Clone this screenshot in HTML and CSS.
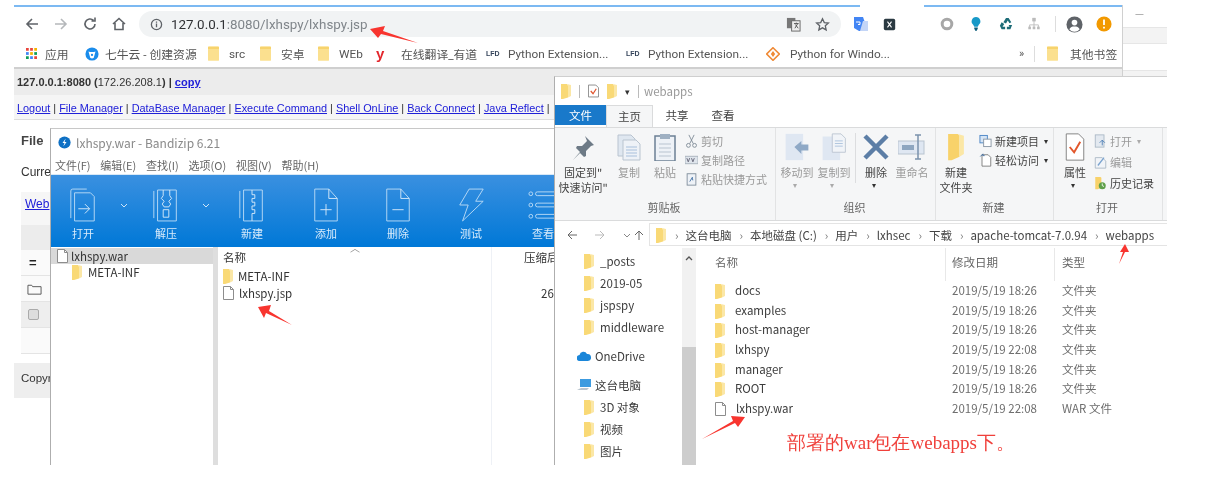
FILE: index.html
```html
<!DOCTYPE html>
<html lang="en">
<head>
    <meta charset="UTF-8">
    <meta name="viewport" content="width=device-width, initial-scale=1.0">
    <title>lxhspy deploy</title>
    <link rel="stylesheet" href="styles.css">
</head>
<body>
    <svg class="sprites" width="0" height="0">
        <symbol id="folder" viewBox="0 0 10 16"><path d="M0 1h6l1 1.500v12L2 16H0z" fill="#f9d976"/><path d="M6 1l4 1v11l-3 1.500V2.500z" fill="#fbe7a6"/></symbol>
        <symbol id="bm-folder" viewBox="0 0 12 16"><path d="M1 0h10a1 1 0 0 1 1 1v14a1 1 0 0 1-1 1H1a1 1 0 0 1-1-1V1a1 1 0 0 1 1-1z" fill="#fbe08f"/><path d="M0 3h12v-2H0z" fill="#f7d26b"/></symbol>
        <symbol id="file" viewBox="0 0 11 14"><path d="M.5.5h7l3 3v10H.5z" fill="#fff" stroke="#8d8d8d"/><path d="M7.500.5v3h3" fill="none" stroke="#8d8d8d"/></symbol>
    </svg>

    <div class="stage">
        <div class="behind-window">
            <div class="behind-min">—</div>
            <div class="behind-strip"></div>
            <div class="behind-gap"></div>
            <div class="behind-strip"></div>
        </div>

        <!-- browser -->
        <div class="browser">
            <div class="tab-line"><span class="tab-line-a"></span><span class="tab-line-gap"></span><span class="tab-line-b"></span></div>
            <div class="toolbar">
                <div class="nav-icons">
                    <svg class="nav-icon" viewBox="0 0 16 16"><path d="M14 8H3M8 3L3 8l5 5" fill="none" stroke="#5f6368" stroke-width="1.600"/></svg>
                    <svg class="nav-icon" viewBox="0 0 16 16"><path d="M2 8h11M8 3l5 5-5 5" fill="none" stroke="#b5b8bb" stroke-width="1.600"/></svg>
                    <svg class="nav-icon" viewBox="0 0 16 16"><path d="M13 8a5 5 0 1 1-1.500-3.600M13 1.500V5H9.500" fill="none" stroke="#5f6368" stroke-width="1.600"/></svg>
                    <svg class="nav-icon" viewBox="0 0 16 16"><path d="M2 8l6-5.500L14 8M4 7v6.500h8V7" fill="none" stroke="#5f6368" stroke-width="1.600"/></svg>
                </div>
                <div class="omnibox">
                    <svg class="info-icon" viewBox="0 0 14 14"><circle cx="7" cy="7" r="5.500" fill="none" stroke="#5f6368" stroke-width="1.400"/><path d="M7 6v4M7 3.800v1.200" stroke="#5f6368" stroke-width="1.400"/></svg>
                    <span class="url"><b>127.0.0.1</b>:8080/lxhspy/lxhspy.jsp</span>
                    <svg class="omni-icon" viewBox="0 0 16 16"><rect x="1" y="1" width="9" height="11" fill="#777"/><rect x="6" y="4" width="9" height="11" fill="#eee" stroke="#666"/><path d="M8.500 7h5M11 6v1M9.500 12l3-5M10 8l3 4" stroke="#555" fill="none"/></svg>
                    <svg class="omni-icon star-icon" viewBox="0 0 16 16"><path d="M8 1.800l1.900 4.100 4.400.5-3.300 3 .9 4.400L8 11.600l-3.900 2.200.9-4.400-3.300-3 4.400-.5z" fill="none" stroke="#5f6368" stroke-width="1.400"/></svg>
                </div>
                <div class="ext-icons">
                    <svg class="ext ext-gt" viewBox="0 0 16 16"><path d="M1 1h9l5 14H6L1 12z" fill="#4285f4"/><path d="M10 5h5v10H7z" fill="#c3d5f7"/><path d="M3 6h4v2.500H5" fill="none" stroke="#fff"/></svg>
                    <svg class="ext ext-x" viewBox="0 0 16 16"><rect x="1" y="1" width="14" height="14" rx="2" fill="#2b3a42"/><path d="M5.500 4.500l5 7M10.500 4.500l-5 7" stroke="#fff" stroke-width="1.300"/></svg>
                    <svg class="ext ext-ring" viewBox="0 0 16 16"><circle cx="8" cy="8" r="5.500" fill="none" stroke="#a7a7a7" stroke-width="3.400"/></svg>
                    <svg class="ext ext-bulb" viewBox="0 0 16 16"><path d="M8 0a5 5 0 0 1 3 9l-1 2H6L5 9a5 5 0 0 1 3-9z" fill="#1799c8"/><path d="M6 12h4v1.500L8.500 16h-1L6 13.500z" fill="#0f5f7c"/></svg>
                    <svg class="ext ext-recycle" viewBox="0 0 16 16"><path d="M8 1L5 6l3 1.500L10 4l2 3 2-1-3-5zM1 10l2-4 3 2-2 3h3v3H3zM15 9l-2 5H9v-3h3l-1-2z" fill="#1c6b77"/></svg>
                    <svg class="ext ext-tree" viewBox="0 0 16 16"><path d="M8 1v5M3 13V9h10v4M8 6v7" fill="none" stroke="#bbb"/><rect x="6" y="1" width="4" height="4" fill="#bbb"/><rect x="1.500" y="11" width="3" height="3" fill="#bbb"/><rect x="6.500" y="11" width="3" height="3" fill="#bbb"/><rect x="11.500" y="11" width="3" height="3" fill="#bbb"/></svg>
                    <span class="ext-sep"></span>
                    <svg class="ext ext-user" viewBox="0 0 18 18"><circle cx="9" cy="9" r="8.500" fill="#5f6368"/><circle cx="9" cy="7" r="3" fill="#fff"/><path d="M3.500 14c1-2.500 3-3 5.500-3s4.500.5 5.500 3a7 7 0 0 1-11 0z" fill="#fff"/></svg>
                    <svg class="ext ext-alert" viewBox="0 0 18 18"><circle cx="9" cy="9" r="8.500" fill="#f29900"/><path d="M9 4v6M9 12v2" stroke="#fff" stroke-width="2"/></svg>
                </div>
            </div>
            <div class="bookmarks">
                <span class="bm bm-apps">
                    <svg class="apps-grid" viewBox="0 0 12 12"><g fill="#e8453c"><rect width="3" height="3"/><rect x="4.500" width="3" height="3"/></g><rect x="9" width="3" height="3" fill="#f4b400"/><rect y="4.500" width="3" height="3" fill="#4285f4"/><rect x="4.500" y="4.500" width="3" height="3" fill="#f4b400"/><rect x="9" y="4.500" width="3" height="3" fill="#0f9d58"/><rect y="9" width="3" height="3" fill="#0f9d58"/><rect x="4.500" y="9" width="3" height="3" fill="#4285f4"/><rect x="9" y="9" width="3" height="3" fill="#e8453c"/></svg>
                    应用
                </span>
                <span class="bm bm-qiniu">
                    <svg class="bm-icon" viewBox="0 0 16 16"><circle cx="8" cy="8" r="7.500" fill="#1a8ceb"/><path d="M4 5c2 1 6 1 8 0l-1.500 5.500a2.500 2.500 0 0 1-5 0z" fill="#fff"/><circle cx="8" cy="9" r="1.300" fill="#1a8ceb"/></svg>
                    七牛云 - 创建资源
                </span>
                <span class="bm bm-src"><svg class="bm-folder"><use href="#bm-folder"/></svg>src</span>
                <span class="bm bm-az"><svg class="bm-folder"><use href="#bm-folder"/></svg>安卓</span>
                <span class="bm bm-web"><svg class="bm-folder"><use href="#bm-folder"/></svg>WEb</span>
                <span class="bm bm-yd"><span class="youdao">y</span>在线翻译_有道</span>
                <span class="bm bm-lfd"><span class="lfd">LFD</span>Python Extension...</span>
                <span class="bm bm-lfd2"><span class="lfd">LFD</span>Python Extension...</span>
                <span class="bm bm-py">
                    <svg class="bm-icon" viewBox="0 0 16 16"><path d="M8 .8L15.200 8 8 15.200.8 8z" fill="none" stroke="#ef8a36" stroke-width="1.800"/><path d="M8 4.500l2.500 3.500L8 11.500 5.500 8z" fill="#ef8a36"/></svg>
                    Python for Windo...
                </span>
                <span class="bm bm-more">»</span>
                <span class="bm-sep"></span>
                <span class="bm bm-other"><svg class="bm-folder"><use href="#bm-folder"/></svg>其他书签</span>
            </div>
            <div class="info-bar"><b>127.0.0.1:8080 (</b>172.26.208.1<b>) | <a href="#">copy</a></b></div>
            <div class="page-nav">
                <a href="#">Logout</a> | <a href="#">File Manager</a> | <a href="#">DataBase Manager</a> | <a href="#">Execute Command</a> | <a href="#">Shell OnLine</a> | <a href="#">Back Connect</a> | <a href="#">Java Reflect</a> |
            </div>
            <div class="page-body">
                <h2 class="page-title">File</h2>
                <p class="page-current">Curre</p>
                <div class="web-row"><a href="#">Web</a></div>
                <div class="table-head"></div>
                <div class="table-row row-eq"><b>=</b></div>
                <div class="table-row row-folder">
                    <svg class="row-folder-icon" viewBox="0 0 16 12"><path d="M1 11.500V2h4l1 1.500h9v8z" fill="none" stroke="#555"/></svg>
                </div>
                <div class="table-row row-check"><span class="fake-check"></span></div>
                <div class="table-row"></div>
            </div>
            <div class="page-foot">Copyr</div>
        </div>

        <!-- bandizip -->
        <div class="bandizip">
            <div class="bz-title">
                <svg class="bz-logo" viewBox="0 0 16 16"><circle cx="8" cy="8" r="7.500" fill="#0e70c4"/><path d="M9.500 3L5.500 8.500H8L6.500 13l4-5.500H8z" fill="#fff"/></svg>
                lxhspy.war - Bandizip 6.21
            </div>
            <div class="bz-menu"><span>文件(F)</span><span>编辑(E)</span><span>查找(I)</span><span>选项(O)</span><span>视图(V)</span><span>帮助(H)</span></div>
            <div class="bz-tools">
                <div class="bz-tool tool-open">
                    <svg class="bz-icon" viewBox="0 0 32 36"><path d="M3 32V3a2 2 0 0 1 2-2h15M7 35V5h17l4 4v26z" fill="none" stroke="#b9daf5"/><path d="M11 22h12M18 17l5 5-5 5" fill="none" stroke="#d6eafa"/></svg>
                    打开
                </div>
                <svg class="bz-chevron chev-open" viewBox="0 0 8 5"><path d="M1 1l3 3 3-3" fill="none" stroke="#cfe5f8"/></svg>
                <div class="bz-tool tool-extract">
                    <svg class="bz-icon" viewBox="0 0 32 36"><path d="M3 32V3M7 35V2h20v33z" fill="none" stroke="#b9daf5"/><path d="M13 2v6l-2 3 3 3-2 3 2 3h5l2-3-2-3 3-3-2-3V2M13 23h6v8h-6z" fill="none" stroke="#d6eafa"/></svg>
                    解压
                </div>
                <svg class="bz-chevron chev-extract" viewBox="0 0 8 5"><path d="M1 1l3 3 3-3" fill="none" stroke="#cfe5f8"/></svg>
                <div class="bz-tool tool-new">
                    <svg class="bz-icon" viewBox="0 0 32 36"><path d="M3 32V3M7 35V2h20v33z" fill="none" stroke="#b9daf5"/><path d="M16 2v5h3v4h-3v4h3v4h-3v4h3v4h-3v8" fill="none" stroke="#d6eafa"/></svg>
                    新建
                </div>
                <div class="bz-tool tool-add">
                    <svg class="bz-icon" viewBox="0 0 32 36"><path d="M4 35V1h15l9 10v24z" fill="none" stroke="#b9daf5"/><path d="M19 1v10h9M16 17v12M10 23h12" fill="none" stroke="#d6eafa"/></svg>
                    添加
                </div>
                <div class="bz-tool tool-del">
                    <svg class="bz-icon" viewBox="0 0 32 36"><path d="M4 35V1h15l9 10v24z" fill="none" stroke="#b9daf5"/><path d="M19 1v10h9M10 23h12" fill="none" stroke="#d6eafa"/></svg>
                    删除
                </div>
                <div class="bz-tool tool-test">
                    <svg class="bz-icon" viewBox="0 0 32 36"><path d="M14 1h15l-8 13h8L7 35l6-17H4z" fill="none" stroke="#b9daf5"/></svg>
                    测试
                </div>
                <div class="bz-tool tool-view">
                    <svg class="bz-icon" viewBox="0 0 32 36"><g fill="none" stroke="#b9daf5"><circle cx="3" cy="6" r="2"/><circle cx="3" cy="18" r="2"/><circle cx="3" cy="30" r="2"/><rect x="8" y="4" width="24" height="4" rx="2"/><rect x="8" y="16" width="24" height="4" rx="2"/><rect x="8" y="28" width="24" height="4" rx="2"/></g></svg>
                    查看
                </div>
            </div>
            <div class="bz-main">
                <div class="bz-tree">
                    <div class="bz-tree-row selected"><svg class="file-ico"><use href="#file"/></svg>lxhspy.war</div>
                    <div class="bz-tree-row indent"><svg class="folder-ico"><use href="#folder"/></svg>META-INF</div>
                </div>
                <div class="bz-list">
                    <div class="bz-head"><span class="bz-col-name">名称</span><span class="bz-sort">︿</span><span class="bz-col-size">压缩后</span></div>
                    <div class="bz-row"><span class="bz-col-name"><svg class="folder-ico"><use href="#folder"/></svg>META-INF</span></div>
                    <div class="bz-row"><span class="bz-col-name"><svg class="file-ico"><use href="#file"/></svg>lxhspy.jsp</span><span class="bz-col-size">26</span></div>
                </div>
            </div>
        </div>

        <!-- explorer -->
        <div class="explorer">
            <div class="ex-title">
                <svg class="folder-ico"><use href="#folder"/></svg>
                <span class="ex-bar"></span>
                <svg class="ex-qa" viewBox="0 0 12 14"><path d="M.5.5h8l3 3v10H.5z" fill="#fff" stroke="#888"/><path d="M3 7l2.500 3L9 4.500" fill="none" stroke="#e0532d" stroke-width="1.300"/></svg>
                <svg class="folder-ico"><use href="#folder"/></svg>
                <span class="ex-caret">▾</span>
                <span class="ex-bar"></span>
                <span class="ex-name">webapps</span>
            </div>
            <div class="ex-tabs">
                <span class="ex-tab tab-file">文件</span>
                <span class="ex-tab tab-home">主页</span>
                <span class="ex-tab">共享</span>
                <span class="ex-tab">查看</span>
            </div>
            <div class="ribbon">
                <div class="rb-group group-clip">
                    <div class="rb-body">
                        <div class="rb-big big-pin">
                            <svg class="rb-icon" viewBox="0 0 28 28"><path d="M16 3l9 9-3 1-5 5 0 5-2 1-4-4-7 7 7-8-4-4 1-2h5l5-5z" fill="#6d7a86"/></svg>
                            <span>固定到"<br>快速访问"</span>
                        </div>
                        <div class="rb-big big-dim big-copy">
                            <svg class="rb-icon" viewBox="0 0 28 28"><path d="M3 2h13l4 4v17H3z" fill="#dfe7f0" stroke="#b9c4d0"/><path d="M8 7h13l4 4v16H8z" fill="#eef2f7" stroke="#b9c4d0"/><path d="M11 14h11M11 17h11M11 20h11M11 23h11" stroke="#a8c0dc"/></svg>
                            <span>复制</span>
                        </div>
                        <div class="rb-big big-dim big-paste">
                            <svg class="rb-icon" viewBox="0 0 28 28"><rect x="4" y="3" width="20" height="25" fill="#eef2f7" stroke="#6c8095" stroke-width="1.500"/><rect x="9" y="1" width="10" height="5" fill="#9fb0c2"/><path d="M8 11h12M8 15h12M8 19h12M8 23h12" stroke="#b9c4d0"/></svg>
                            <span>粘贴</span>
                        </div>
                        <div class="rb-small-col col-clip">
                            <div class="rb-small"><svg class="rb-mini" viewBox="0 0 14 16"><path d="M4 1l5 10M10 1L5 11" stroke="#7b8894" fill="none"/><circle cx="3.500" cy="13" r="2.200" fill="none" stroke="#7b8894"/><circle cx="10.500" cy="13" r="2.200" fill="none" stroke="#7b8894"/></svg>剪切</div>
                            <div class="rb-small"><svg class="rb-mini" viewBox="0 0 14 14"><rect y="3" width="14" height="8" fill="#dfe5ec" stroke="#a9b3bd"/><path d="M2 5l1.500 4L5 5M7 5l1.500 4L10 5" fill="none" stroke="#667"/></svg>复制路径</div>
                            <div class="rb-small"><svg class="rb-mini" viewBox="0 0 14 16"><rect x="2" y="2" width="10" height="13" fill="#eef2f7" stroke="#7d8b99"/><path d="M5 11l3-5v3h1" fill="none" stroke="#3f6ea3"/></svg>粘贴快捷方式</div>
                        </div>
                    </div>
                    <div class="rb-label">剪贴板</div>
                </div>
                <div class="rb-group group-org">
                    <div class="rb-body">
                        <div class="rb-big big-dim big-move">
                            <svg class="rb-icon" viewBox="0 0 28 32"><rect x="1" y="1" width="20" height="30" fill="#dfe7f2"/><path d="M11 16l8-7v4h8v7h-8v4z" fill="#8fa9c6"/></svg>
                            <span>移动到<i class="rb-down">▾</i></span>
                        </div>
                        <div class="rb-big big-dim big-copyto">
                            <svg class="rb-icon" viewBox="0 0 28 32"><rect x="1" y="4" width="20" height="27" fill="#dfe7f2"/><path d="M12 1h10l5 5v16H12z" fill="#f1f4f8" stroke="#b9c4d0"/><path d="M15 9h9M15 12h9M15 15h9" stroke="#a8c0dc"/></svg>
                            <span>复制到<i class="rb-down">▾</i></span>
                        </div>
                        <span class="rb-divider"></span>
                        <div class="rb-big big-del">
                            <svg class="rb-icon" viewBox="0 0 28 28"><path d="M3 3l22 22M25 3L3 25" stroke="#5c7ea6" stroke-width="4.500"/></svg>
                            <span>删除<i class="rb-down dark">▾</i></span>
                        </div>
                        <div class="rb-big big-dim big-rename">
                            <svg class="rb-icon" viewBox="0 0 28 28"><rect x="0" y="8" width="26" height="13" fill="#dfe7f2" stroke="#b9c4d0"/><rect x="4" y="12" width="12" height="5" fill="#8ea6c0"/><path d="M20 2v24M17 2h6M17 26h6" stroke="#7b93ad" stroke-width="1.500"/></svg>
                            <span>重命名</span>
                        </div>
                    </div>
                    <div class="rb-label">组织</div>
                </div>
                <div class="rb-group group-new">
                    <div class="rb-body">
                        <div class="rb-big big-folder">
                            <svg class="rb-icon" viewBox="0 0 20 32"><path d="M1 1h11l2 2v24l-9 4H1z" fill="#f8d26a"/><path d="M12 1l7 2v21l-5 3V3z" fill="#fbe7a6"/></svg>
                            <span>新建<br>文件夹</span>
                        </div>
                        <div class="rb-small-col col-new">
                            <div class="rb-small"><svg class="rb-mini" viewBox="0 0 14 14"><rect x="1" y="1" width="8" height="8" fill="#d6e5f5" stroke="#4c86c6"/><rect x="5" y="5" width="8" height="8" fill="#fff" stroke="#8a97a5"/></svg>新建项目<i class="rb-side">▾</i></div>
                            <div class="rb-small"><svg class="rb-mini" viewBox="0 0 14 16"><path d="M3 2h7l3 3v10H3z" fill="#fff" stroke="#777"/><path d="M1 4l3-3v2h2" fill="none" stroke="#3f6ea3"/></svg>轻松访问<i class="rb-side">▾</i></div>
                        </div>
                    </div>
                    <div class="rb-label">新建</div>
                </div>
                <div class="rb-group group-open">
                    <div class="rb-body">
                        <div class="rb-big big-props">
                            <svg class="rb-icon" viewBox="0 0 22 32"><path d="M1 1h14l6 6v24H1z" fill="#fff" stroke="#777"/><path d="M5 16l5 6 7-12" fill="none" stroke="#e2572b" stroke-width="2.200"/></svg>
                            <span>属性<i class="rb-down dark">▾</i></span>
                        </div>
                        <div class="rb-small-col col-open">
                            <div class="rb-small rb-muted"><svg class="rb-mini" viewBox="0 0 14 16"><rect x="1" y="1" width="10" height="14" fill="#e3e9f0" stroke="#a9b7c5"/><path d="M9 13V7M6 10l3-3 3 3" stroke="#4a7db5" fill="none"/></svg>打开 <i class="rb-side light">▾</i></div>
                            <div class="rb-small rb-muted"><svg class="rb-mini" viewBox="0 0 14 16"><path d="M1 3h8l4 4v8H1z" fill="#f1f4f8" stroke="#a9b7c5"/><path d="M4 12l7-9" stroke="#7aa3cf" stroke-width="1.500"/></svg>编辑</div>
                            <div class="rb-small"><svg class="rb-mini" viewBox="0 0 14 16"><path d="M1 1h6l1 1v11l-4 2H1z" fill="#f8d26a"/><circle cx="9" cy="11" r="4" fill="#5fa04a"/><path d="M9 8.500V11l2 1" stroke="#fff" fill="none"/></svg>历史记录</div>
                        </div>
                    </div>
                    <div class="rb-label">打开</div>
                </div>
            </div>
            <div class="ex-address">
                <svg class="ex-nav" viewBox="0 0 12 12"><path d="M11 6H2M6 2L2 6l4 4" fill="none" stroke="#666"/></svg>
                <svg class="ex-nav ex-nav-off" viewBox="0 0 12 12"><path d="M1 6h9M6 2l4 4-4 4" fill="none" stroke="#bbb"/></svg>
                <svg class="ex-nav ex-nav-drop" viewBox="0 0 12 12"><path d="M3 5l3 3 3-3" fill="none" stroke="#888"/></svg>
                <svg class="ex-nav" viewBox="0 0 12 12"><path d="M6 11V2M2 6l4-4 4 4" fill="none" stroke="#666"/></svg>
                <div class="crumbs">
                    <svg class="folder-ico"><use href="#folder"/></svg>
                    <i class="crumb-sep">›</i><span>这台电脑</span>
                    <i class="crumb-sep">›</i><span>本地磁盘 (C:)</span>
                    <i class="crumb-sep">›</i><span>用户</span>
                    <i class="crumb-sep">›</i><span>lxhsec</span>
                    <i class="crumb-sep">›</i><span>下载</span>
                    <i class="crumb-sep">›</i><span>apache-tomcat-7.0.94</span>
                    <i class="crumb-sep">›</i><span>webapps</span>
                </div>
            </div>
            <div class="ex-main">
                <div class="ex-tree">
                    <div class="ex-tree-row sub"><svg class="folder-ico"><use href="#folder"/></svg>_posts</div>
                    <div class="ex-tree-row sub"><svg class="folder-ico"><use href="#folder"/></svg>2019-05</div>
                    <div class="ex-tree-row sub"><svg class="folder-ico"><use href="#folder"/></svg>jspspy</div>
                    <div class="ex-tree-row sub"><svg class="folder-ico"><use href="#folder"/></svg>middleware</div>
                    <div class="ex-tree-row top gap">
                        <svg class="tree-icon" viewBox="0 0 14 10"><path d="M3 10a3 3 0 0 1-.5-6A4 4 0 0 1 10 3a3.500 3.500 0 0 1 1 7z" fill="#1a86d9"/></svg>
                        OneDrive
                    </div>
                    <div class="ex-tree-row top gap">
                        <svg class="tree-icon" viewBox="0 0 14 12"><rect x="3" y="0" width="11" height="8" fill="#3c9be0"/><path d="M0 11l4-2h8l-2 2z" fill="#b9c4cd"/></svg>
                        这台电脑
                    </div>
                    <div class="ex-tree-row sub"><svg class="folder-ico"><use href="#folder"/></svg>3D 对象</div>
                    <div class="ex-tree-row sub"><svg class="folder-ico"><use href="#folder"/></svg>视频</div>
                    <div class="ex-tree-row sub"><svg class="folder-ico"><use href="#folder"/></svg>图片</div>
                </div>
                <div class="ex-scroll">
                    <svg class="scroll-up" viewBox="0 0 8 5"><path d="M1 4l3-3 3 3" fill="none" stroke="#555" stroke-width="1.300"/></svg>
                    <div class="scroll-thumb"></div>
                </div>
                <div class="ex-list">
                    <div class="ex-head">
                        <span class="head-name">名称</span>
                        <span class="head-date">修改日期</span>
                        <span class="head-type">类型</span>
                    </div>
                    <div class="ex-row"><span class="cell-name"><svg class="folder-ico"><use href="#folder"/></svg>docs</span><span>2019/5/19 18:26</span><span>文件夹</span></div>
                    <div class="ex-row"><span class="cell-name"><svg class="folder-ico"><use href="#folder"/></svg>examples</span><span>2019/5/19 18:26</span><span>文件夹</span></div>
                    <div class="ex-row"><span class="cell-name"><svg class="folder-ico"><use href="#folder"/></svg>host-manager</span><span>2019/5/19 18:26</span><span>文件夹</span></div>
                    <div class="ex-row"><span class="cell-name"><svg class="folder-ico"><use href="#folder"/></svg>lxhspy</span><span>2019/5/19 22:08</span><span>文件夹</span></div>
                    <div class="ex-row"><span class="cell-name"><svg class="folder-ico"><use href="#folder"/></svg>manager</span><span>2019/5/19 18:26</span><span>文件夹</span></div>
                    <div class="ex-row"><span class="cell-name"><svg class="folder-ico"><use href="#folder"/></svg>ROOT</span><span>2019/5/19 18:26</span><span>文件夹</span></div>
                    <div class="ex-row"><span class="cell-name"><svg class="file-ico"><use href="#file"/></svg>lxhspy.war</span><span>2019/5/19 22:08</span><span>WAR 文件</span></div>
                    <p class="ex-note">部署的war包在webapps下。</p>
                </div>
            </div>
        </div>

        <!-- red arrows drawn over the screenshots -->
        <svg class="arrows" viewBox="0 0 1215 491">
            <g fill="#f8352f">
                <polygon points="370,29 385,26 383,31 418,43 381,34 378,38"/>
                <polygon points="258,307 271,305 269,311 292,325 266,313 264,318"/>
                <polygon points="745,417 731,416 733,421 702,439 735,423 738,427"/>
                <polygon points="1125,244 1120,252 1123,252 1119,264 1125,252 1129,252"/>
            </g>
        </svg>
    </div>
</body>
</html>
```

FILE: styles.css
```css
:root {
    --ui-font: "Noto Sans CJK SC", "Noto Sans", sans-serif;
    --page-font: "Liberation Sans", Arial, sans-serif;
    --text-dim: #9a9a9a;
    --text-mid: #6d6d6d;
    --text-dark: #3c3c3c;
}

* {
    box-sizing: border-box;
}

html, body {
    margin: 0;
    height: 100%;
    overflow: hidden;
    background: #fff;
}

.sprites {
    position: absolute;
}

.stage {
    position: relative;
    width: 1215px;
    height: 491px;
    overflow: hidden;
    font-family: var(--ui-font);
    filter: blur(0.35px);
}

svg {
    display: block;
    flex: none;
}

.folder-ico {
    width: 10px;
    height: 16px;
}

.file-ico {
    width: 11px;
    height: 14px;
}

/* window behind the browser */
.behind-window {
    position: absolute;
    left: 1123px;
    top: 5px;
    width: 44px;
    height: 72px;
}

.behind-min {
    height: 22px;
    padding: 0 0 0 12px;
    font-size: 10px;
    line-height: 16px;
    color: #888;
}

.behind-strip {
    height: 17px;
    background: #f3f3f3;
    border-top: 1px solid #e6e6e6;
    border-bottom: 1px solid #e6e6e6;
}

.behind-gap {
    height: 26px;
}

/* browser window */
.browser {
    position: absolute;
    left: 14px;
    top: 5px;
    width: 1109px;
    height: 400px;
    background: #fff;
    border-right: 1px solid #d0d0d0;
}

.tab-line {
    display: flex;
    height: 2px;
}

.tab-line-a {
    width: 846px;
    background: #7cb9f2;
}

.tab-line-gap {
    width: 64px;
}

.tab-line-b {
    flex: 1;
    background: #7cb9f2;
}

.toolbar {
    display: flex;
    align-items: center;
    height: 31px;
    padding-top: 3px;
}

.nav-icons {
    display: flex;
    gap: 13px;
    padding-left: 10px;
    width: 125px;
}

.nav-icon {
    width: 16px;
    height: 16px;
}

.omnibox {
    display: flex;
    align-items: center;
    width: 702px;
    height: 26px;
    border-radius: 13px;
    background: #f1f3f4;
    padding-left: 11px;
}

.info-icon {
    width: 13px;
    height: 13px;
    margin-right: 8px;
}

.url {
    flex: 1;
    font-family: Roboto, sans-serif;
    font-size: 13.400px;
    color: #80868b;
}

.url b {
    font-weight: 400;
    color: #303134;
}

.omni-icon {
    width: 15px;
    height: 15px;
    margin-right: 14px;
}

.star-icon {
    margin-right: 11px;
}

.ext-icons {
    display: flex;
    align-items: center;
    padding-left: 12px;
}

.ext {
    width: 14px;
    height: 14px;
}

.ext-gt { width: 16px; height: 16px; margin-right: 14px; }
.ext-x { width: 13px; height: 13px; margin-right: 44px; }
.ext-ring { margin-right: 15px; }
.ext-bulb { margin-right: 16px; }
.ext-recycle { margin-right: 14px; }
.ext-tree { margin-right: 14px; }
.ext-user { width: 17px; height: 17px; margin-right: 13px; }
.ext-alert { width: 16px; height: 16px; }

.ext-sep {
    width: 1px;
    height: 16px;
    background: #ddd;
    margin-right: 10px;
}

.bookmarks {
    display: flex;
    align-items: center;
    height: 31px;
    padding-top: 2px;
    font-family: Roboto, "Noto Sans CJK SC", sans-serif;
    font-size: 11.800px;
    color: #555;
    border-bottom: 2px solid #cfcfcf;
    white-space: nowrap;
}

.bm {
    display: flex;
    align-items: center;
    gap: 6px;
}

.bm-apps { width: 59px; margin-left: 12px; }
.bm-qiniu { width: 123px; }
.bm-src { width: 52px; }
.bm-az { width: 58px; }
.bm-web { width: 57px; }
.bm-yd { width: 111px; }
.bm-lfd { width: 140px; }
.bm-lfd2 { width: 140px; }
.bm-py { width: 253px; gap: 10px; }
.bm-more { width: 15px; font-size: 11px; }
.bm-other .bm-folder { margin-right: 6px; }

.bm-icon {
    width: 14px;
    height: 14px;
}

.bm-folder {
    width: 11px;
    height: 15px;
    margin-right: 4px;
}

.apps-grid {
    width: 11px;
    height: 11px;
    margin-right: 2px;
}

.youdao {
    font-family: var(--page-font);
    font-weight: 700;
    font-size: 15px;
    line-height: 14px;
    color: #e3262c;
    width: 20px;
    padding-left: 1px;
}

.lfd {
    font-family: var(--page-font);
    font-weight: 700;
    font-size: 7px;
    color: #34435a;
    width: 16px;
}

.bm-sep {
    width: 1px;
    height: 16px;
    background: #ddd;
    margin-right: 12px;
}

.info-bar {
    height: 26px;
    background: #ececec;
    padding: 7px 0 0 3px;
    font-family: var(--page-font);
    font-size: 11px;
    color: #333;
}

.info-bar a,
.page-nav a {
    color: #2020d8;
}

.page-nav {
    height: 25px;
    background: #f5f5f5;
    border-bottom: 1px solid #ddd;
    padding: 7px 0 0 3px;
    font-family: var(--page-font);
    font-size: 10.900px;
    color: #333;
    white-space: nowrap;
}

.page-body {
    padding: 0 0 0 7px;
    font-family: var(--page-font);
}

.page-title {
    margin: 0;
    padding-top: 13px;
    height: 39px;
    font-size: 13px;
    color: #444;
}

.page-current {
    margin: 0;
    height: 33px;
    font-size: 12px;
    line-height: 26px;
    color: #333;
}

.web-row {
    height: 33px;
    background: #f6f6f6;
    padding: 5px 0 0 4px;
    font-size: 12px;
}

.web-row a {
    color: #2020d8;
}

.table-head {
    height: 25px;
    background: #ececec;
}

.table-row {
    height: 26px;
    background: #fafafa;
    border-bottom: 1px solid #e4e4e4;
    display: flex;
    align-items: center;
    padding-left: 8px;
    font-size: 13px;
    color: #222;
}

.row-check {
    background: #eeeeee;
}

.row-folder-icon {
    width: 15px;
    height: 12px;
    margin-left: -2px;
}

.fake-check {
    width: 11px;
    height: 11px;
    border: 1px solid #aaa;
    border-radius: 2px;
    background: #ddd;
    margin-left: -1px;
}

.page-foot {
    margin-top: 9px;
    height: 35px;
    background: #eeeeee;
    padding: 9px 0 0 7px;
    font-family: var(--page-font);
    font-size: 11.500px;
    color: #333;
}

/* bandizip window */
.bandizip {
    position: absolute;
    left: 50px;
    top: 128px;
    width: 504px;
    height: 337px;
    background: #fff;
    border-left: 1px solid #aeaeae;
    border-top: 1px solid #c8c8c8;
    display: flex;
    flex-direction: column;
    overflow: hidden;
}

.bz-title {
    display: flex;
    align-items: center;
    gap: 5px;
    height: 25px;
    padding: 2px 0 0 7px;
    font-size: 12px;
    color: #8a8a8a;
}

.bz-logo {
    width: 13px;
    height: 13px;
}

.bz-menu {
    display: flex;
    gap: 9.800px;
    height: 20px;
    padding-left: 4px;
    font-size: 11px;
    line-height: 22px;
    color: #666;
}

.bz-tools {
    display: flex;
    height: 73px;
    background: linear-gradient(#3a90e0, #0078d7);
    border-top: 1px solid #d8e8f6;
}

.bz-tool {
    display: flex;
    flex: none;
    flex-direction: column;
    align-items: center;
    gap: 3px;
    padding-top: 13px;
    font-size: 11px;
    line-height: 16px;
    color: #d8ebfb;
    width: 72px;
}

.bz-icon {
    width: 30px;
    height: 34px;
}

.tool-open { margin-left: -4px; }
.tool-extract { margin-left: 2px; }
.tool-new { margin-left: 6px; }
.tool-add { margin-left: 2px; }
.tool-test { margin-left: 1px; }

.bz-chevron {
    width: 8px;
    height: 5px;
    margin-top: 28px;
}

.chev-open { margin-left: 1px; }

.bz-main {
    display: flex;
    flex: 1;
}

.bz-tree {
    width: 167px;
    padding: 1px 0 0 0;
    border-right: 5px solid #dedede;
    font-size: 11.500px;
    color: #333;
}

.bz-tree-row {
    display: flex;
    align-items: center;
    gap: 3px;
    height: 16px;
    padding-left: 6px;
}

.bz-tree-row.selected {
    background: #d9d9d9;
}

.bz-tree-row.indent {
    padding-left: 21px;
    gap: 6px;
}

.bz-list {
    position: relative;
    flex: 1;
    font-size: 11.500px;
    color: #333;
}

.bz-list::after {
    content: "";
    position: absolute;
    left: 273px;
    top: 0;
    bottom: 0;
    width: 1px;
    background: #eef1f6;
}

.bz-head {
    position: relative;
    display: flex;
    height: 20px;
    padding-left: 5px;
    align-items: center;
    white-space: nowrap;
}

.bz-sort {
    position: absolute;
    left: 132px;
    top: -7px;
    font-size: 10px;
    color: #888;
}

.bz-row {
    display: flex;
    align-items: center;
    height: 17.500px;
    padding-left: 5px;
}

.bz-col-name {
    display: flex;
    align-items: center;
    gap: 5px;
}

.bz-head .bz-col-size {
    position: absolute;
    left: 306px;
}

.bz-row .bz-col-size {
    position: absolute;
    left: 323px;
}

/* explorer window */
.explorer {
    position: absolute;
    left: 554px;
    top: 76px;
    width: 613px;
    height: 389px;
    background: #fff;
    border-left: 1px solid #aeaeae;
    border-top: 1px solid #cfcfcf;
    display: flex;
    flex-direction: column;
}

.ex-title {
    display: flex;
    align-items: center;
    gap: 8px;
    height: 28px;
    padding: 0 0 0 6px;
    font-size: 11.500px;
    color: #9a9a9a;
}

.ex-bar {
    width: 1px;
    height: 13px;
    background: #bbb;
}

.ex-qa {
    width: 11px;
    height: 14px;
}

.ex-caret {
    font-size: 9px;
    color: #333;
}

.ex-name {
    margin-left: -3px;
}

.ex-tabs {
    display: flex;
    height: 24px;
    font-size: 11.500px;
    color: #444;
}

.ex-tab {
    width: 46px;
    text-align: center;
    line-height: 18px;
    padding-top: 1px;
}

.tab-file {
    width: 51px;
    height: 20px;
    background: #1979ca;
    color: #fff;
}

.tab-home {
    width: 47px;
    background: #f5f6f7;
    border: 1px solid #dadbdc;
    border-bottom: 0;
    margin-right: 1px;
}

.ribbon {
    display: flex;
    height: 94px;
    margin-top: -2px;
    background: #f5f6f7;
    border-top: 1px solid #dadbdc;
    border-bottom: 1px solid #dadbdc;
    font-size: 11px;
    color: #444;
}

.rb-group {
    display: flex;
    flex-direction: column;
    border-right: 1px solid #e2e3e4;
}

.group-clip { width: 221px; }
.group-org { width: 160px; }
.group-new { width: 118px; }
.group-open { width: 109px; }

.rb-body {
    display: flex;
    flex: 1;
    padding-top: 5px;
}

.rb-label {
    height: 21px;
    padding-right: 2px;
    text-align: center;
    line-height: 16px;
    color: #666;
}

.rb-big {
    display: flex;
    flex-direction: column;
    align-items: center;
    gap: 3px;
    line-height: 15px;
    text-align: center;
    white-space: nowrap;
}

.rb-big span {
    position: relative;
}

.rb-big.big-dim {
    color: var(--text-dim);
}

.rb-icon {
    width: 28px;
    height: 28px;
    margin-bottom: 1px;
}

.big-pin { width: 56px; }
.big-copy { width: 28px; margin-left: 4px; }
.big-paste { width: 28px; margin-left: 8px; }
.big-move { width: 34px; margin-left: 4px; }
.big-copyto { width: 34px; margin-left: 3px; }
.big-del { width: 30px; margin-left: 5px; }
.big-rename { width: 36px; margin-left: 3px; }
.big-folder { width: 40px; }
.big-props { width: 28px; margin-left: 7px; }

.rb-divider {
    width: 1px;
    height: 50px;
    margin-left: 4px;
    background: #dcdddf;
}

.rb-down {
    position: absolute;
    left: 50%;
    top: 12px;
    margin-left: -4px;
    font-size: 8px;
    font-style: normal;
    color: #aaa;
}

.rb-down.dark {
    color: #333;
}

.rb-small-col {
    display: flex;
    flex-direction: column;
    gap: 4px;
}

.col-clip { margin-left: 6px; }
.col-new { margin-left: 3px; }
.col-open { margin-left: 5px; gap: 6px; }

.rb-small {
    display: flex;
    align-items: center;
    gap: 3px;
    height: 15px;
    white-space: nowrap;
}

.col-clip .rb-small,
.rb-small.rb-muted {
    color: var(--text-dim);
}

.rb-mini {
    width: 13px;
    height: 14px;
}

.rb-side {
    font-size: 8px;
    font-style: normal;
    margin-left: 2px;
    color: #333;
}

.rb-side.light {
    color: #aaa;
}

.ex-address {
    display: flex;
    align-items: center;
    height: 27px;
    padding-left: 11px;
    font-size: 11.500px;
    color: #444;
}

.ex-nav {
    width: 12px;
    height: 12px;
    margin-right: 16px;
}

.ex-nav-drop {
    margin-right: 0;
    margin-left: -1px;
}

.crumbs {
    display: flex;
    align-items: center;
    flex: 1;
    height: 23px;
    margin-left: -12px;
    padding-left: 6px;
    border: 1px solid #e4e4e4;
    border-right: 0;
    background: #fff;
    white-space: nowrap;
}

.crumb-sep {
    font-style: normal;
    color: #777;
    margin: 0 7px 0 8px;
}

.crumbs svg {
    margin-right: 1px;
}

.ex-main {
    display: flex;
    flex: 1;
    min-height: 0;
}

.ex-tree {
    width: 127px;
    padding-top: 2px;
    font-size: 11.500px;
    color: var(--text-dark);
}

.ex-tree-row {
    display: flex;
    align-items: center;
    height: 22px;
    gap: 6px;
}

.ex-tree-row.sub {
    padding-left: 29px;
}

.ex-tree-row.top {
    padding-left: 22px;
    gap: 4px;
}

.ex-tree-row.gap {
    margin-top: 7px;
}

.tree-icon {
    width: 14px;
    height: 12px;
}

.ex-scroll {
    display: flex;
    flex-direction: column;
    width: 14px;
    background: #f1f1f1;
}

.scroll-up {
    width: 8px;
    height: 5px;
    margin: 8px auto 0;
}

.scroll-thumb {
    margin-top: 86px;
    flex: 1;
    background: #cdcdcd;
}

.ex-list {
    flex: 1;
    font-size: 11.500px;
    color: var(--text-mid);
}

.ex-head {
    display: grid;
    grid-template-columns: 250px 109px 1fr;
    height: 33px;
    line-height: 29px;
    color: #666;
}

.head-name {
    padding-left: 19px;
    border-right: 1px solid #e8e8e8;
}

.head-date {
    padding-left: 6px;
    border-right: 1px solid #e8e8e8;
}

.head-type {
    padding-left: 7px;
}

.ex-row {
    display: grid;
    grid-template-columns: 256px 110px 1fr;
    height: 19.700px;
    line-height: 19.700px;
}

.cell-name {
    display: flex;
    align-items: center;
    gap: 10px;
    padding-left: 19px;
    color: var(--text-dark);
}

.ex-note {
    margin: 13px 0 0 91px;
    font-family: "Liberation Serif", serif;
    font-size: 19px;
    line-height: 22px;
    color: #f0403b;
    white-space: nowrap;
}

.arrows {
    position: absolute;
    left: 0;
    top: 0;
    width: 1215px;
    height: 491px;
}
```
